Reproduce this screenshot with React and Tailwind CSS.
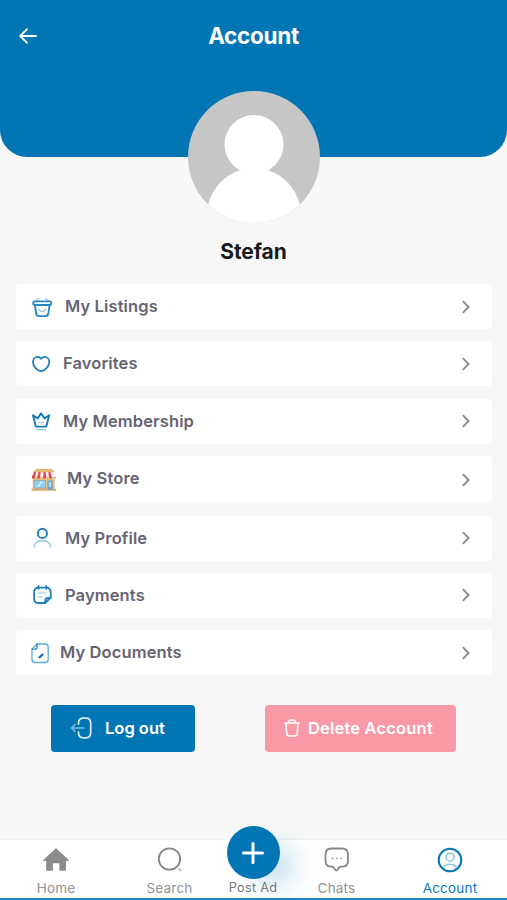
import React from "react";

const BLUE = "#0276b8";

function BasketIcon() {
  return (
    <svg width="22" height="22" viewBox="31 296 22 22" className="shrink-0" fill="none" stroke="#2787c2" strokeWidth="1.9" strokeLinecap="round" strokeLinejoin="round">
      <path d="M38.500 298.500l-2.600 2.600M45.800 298.500l2.600 2.600" stroke="#8cc4e4" strokeWidth="1.200" />
      <rect x="33.200" y="301.400" width="18" height="3.600" rx="1.700" />
      <path d="M34.900 305.200l1.300 8.400c.3 1.800 1.200 2.500 2.900 2.500h6.400c1.700 0 2.500-.7 2.800-2.500l1.300-8.400" />
      <path d="M39 309c.6 3.300 6 3.300 6.600 0" stroke="#8cc4e4" strokeWidth="1.300" />
    </svg>
  );
}

function HeartIcon() {
  return (
    <svg width="22" height="20" viewBox="30 353 22 20" className="shrink-0" fill="none" stroke="#1e80bd" strokeWidth="1.8" strokeLinejoin="round">
      <path d="M41.700 370.100c-.4.150-.8.150-1.200 0C37.600 369.200 33 366 33 361c0-2.900 2-5.100 4.500-5.100 1.500 0 2.800.7 3.600 1.900.8-1.200 2.100-1.900 3.600-1.900 2.500 0 4.500 2.200 4.500 5.100 0 5-4.600 8.200-7.500 9.100z" />
    </svg>
  );
}

function CrownIcon() {
  return (
    <svg width="22" height="20" viewBox="30 410 22 20" className="shrink-0" fill="none" stroke="#1779b8" strokeWidth="1.900" strokeLinejoin="round" strokeLinecap="round">
      <path d="M35.900 425.600L33 414.200l4.700 3.200 3.400-5 3.400 5 4.700-3.200-2.900 11.400z" />
      <path d="M38.800 421.500h4.600M36.500 428.600h9.200" stroke="#8cc4e4" strokeWidth="1.200" />
    </svg>
  );
}

function StoreIcon() {
  return (
    <svg width="26" height="25" viewBox="30 467 26 25" className="shrink-0">
      <path d="M35.500 469h17v5h-17z M33.500 470.500h20.500v4H33.500z" fill="#dfb878" />
      <rect x="32.700" y="475" width="22" height="14.500" fill="#e7bd7d" />
      <rect x="31.500" y="488.700" width="24.500" height="2.100" fill="#d8ac73" />
      <rect x="34.300" y="480.500" width="11.200" height="7.500" fill="#8fd0ee" stroke="#8fa9b5" strokeWidth=".8" />
      <path d="M36.300 487l5-6h2.400l-5 6z" fill="#c5e9f7" />
      <rect x="47.500" y="480.500" width="5.200" height="9" fill="#699fc8" />
      <rect x="48.700" y="481.700" width="2.600" height="5.500" fill="#aadbef" />
      <path d="M34 472h19.200l2.200 5.300H31.700z" fill="#fff0ed" />
      <path d="M34 472h2.200l-1.300 5.300h-3.200zM38.500 472h2.200l-.6 5.300h-2.900zM43.400 472h2.200l.6 5.300h-3.100zM48.200 472h2.200l1.600 5.300h-3z" fill="#e84f54" />
      <path d="M31.700 477h3.200a1.600 1.800 0 0 1-3.200 0M37.200 477h3a1.500 1.800 0 0 1-3 0M43 477h3.200a1.600 1.800 0 0 1-3.200 0M49 477h3a1.500 1.800 0 0 1-3 0M54.200 477h1.600l-.4 1.500z" fill="#d9464d" />
    </svg>
  );
}

function ProfileIcon() {
  return (
    <svg width="22" height="22" viewBox="31 527 22 22" className="shrink-0" fill="none">
      <circle cx="42.400" cy="533.400" r="4.600" stroke="#1e80bd" strokeWidth="1.900" />
      <path d="M34.300 547c0-3.900 3.400-6.500 8.100-6.500s8.100 2.600 8.100 6.500" stroke="#8cc4e4" strokeWidth="1.400" strokeLinecap="round" />
    </svg>
  );
}

function PaymentsIcon() {
  return (
    <svg width="22" height="22" viewBox="31 584 22 22" className="shrink-0" fill="none" stroke="#1e80bd" strokeWidth="1.800" strokeLinecap="round" strokeLinejoin="round">
      <path d="M50.700 597.500v-5.300c0-3-1.600-4.600-4.600-4.600h-7.400c-3 0-4.600 1.600-4.600 4.600v6.200c0 3 1.600 4.600 4.600 4.600h6.500z" />
      <path d="M50.600 597.800h-2.500c-2 0-2.900.9-2.900 2.700v2.400M38.500 585.800v3M46.300 585.800v3" />
      <path d="M38 593h8.200M38 597h4.200" stroke="#8cc4e4" strokeWidth="1.200" />
    </svg>
  );
}

function DocumentIcon() {
  return (
    <svg width="20" height="22" viewBox="30 640 20 22" className="shrink-0" fill="none" stroke="#5ba7d3" strokeWidth="1.300" strokeLinecap="round" strokeLinejoin="round">
      <path d="M37 642h8.200c2 0 3 1 3 3v12.500c0 2-1 3-3 3H35c-2 0-3-1-3-3V647z" />
      <path d="M37 642v3c0 1.500-.7 2.200-2.200 2.200H32.200" stroke="#2787c2" />
      <path d="M39 656l4-4" stroke="#0874b8" strokeWidth="2.400" strokeLinecap="butt" />
    </svg>
  );
}

function Chevron() {
  return (
    <svg width="12" height="16" viewBox="0 0 12 16" className="mr-[20px] ml-auto" fill="none" stroke="#8b8b8e" strokeWidth="1.900">
      <path d="M2.800 2.200L8.600 8l-5.800 5.800" />
    </svg>
  );
}

const rows = [
  { label: "My Listings", Icon: BasketIcon, pad: "pl-[15px] gap-[12px]", h: "h-[45px]", text: "pb-px" },
  { label: "Favorites", Icon: HeartIcon, pad: "pl-[14px] gap-[11px]", h: "h-[45px]", text: "pb-px" },
  { label: "My Membership", Icon: CrownIcon, pad: "pl-[14px] gap-[11px]", h: "h-[45px]", text: "pb-px" },
  { label: "My Store", Icon: StoreIcon, pad: "pl-[14px] gap-[11px]", h: "h-[47px]", text: "pb-[3px]" },
  { label: "My Profile", Icon: ProfileIcon, pad: "pl-[15px] gap-[12px]", h: "h-[45px]", text: "pb-px" },
  { label: "Payments", Icon: PaymentsIcon, pad: "pl-[15px] gap-[12px]", h: "h-[45px]", text: "pb-px" },
  { label: "My Documents", Icon: DocumentIcon, pad: "pl-[14px] gap-[10px]", h: "h-[45px]", text: "pb-[2px]" },
];

export default function App() {
  return (
    <div className="flex h-[900px] w-[507px] flex-col overflow-hidden bg-[#f7f7f7] font-['Inter',sans-serif]">
      <header className="grid h-[157px] shrink-0 grid-cols-[60px_1fr_60px] items-start rounded-b-[27px] bg-[#0276b5] text-white">
        <svg width="20" height="18" viewBox="0 0 20 18" className="mt-[27px] ml-[18px]" fill="none" stroke="white" strokeWidth="1.900" strokeLinecap="round" strokeLinejoin="round">
          <path d="M18 9H2.200M9 2.200L2.200 9 9 15.800" />
        </svg>
        <h1 className="mt-[21px] text-center text-[22.500px] leading-[30px] font-bold tracking-[-0.300px]">Account</h1>
      </header>

      <section className="-mt-[66px] flex shrink-0 flex-col items-center">
        <svg width="132" height="132" viewBox="0 0 132 132">
          <defs>
            <clipPath id="avatar"><circle cx="66" cy="66" r="66" /></clipPath>
          </defs>
          <g clipPath="url(#avatar)">
            <rect width="132" height="132" fill="#c6c6c6" />
            <circle cx="66" cy="53.500" r="29.500" fill="white" />
            <path d="M20 114C25 95 38 84 51 79.500h30C94 84 107 95 112 114v20H20z" fill="white" />
          </g>
        </svg>
        <h2 className="mt-[14px] text-[21px] leading-[30px] font-bold tracking-[-0.100px] text-[#1b1b1b]">Stefan</h2>
      </section>

      <ul className="mt-[17px] mr-[15px] ml-[16px] flex shrink-0 flex-col gap-[12.400px]">
        {rows.map(({ label, Icon, pad, h, text }) => (
          <li key={label} className={`flex items-center rounded-[4px] bg-white ${pad} ${h}`}>
            <Icon />
            <span className={`text-[16.500px] leading-[20px] font-semibold tracking-[0.120px] text-[#666472] ${text}`}>{label}</span>
            <Chevron />
          </li>
        ))}
      </ul>

      <div className="mt-[30px] flex shrink-0 justify-between pr-[51px] pl-[51px] text-[16.500px] font-semibold text-white">
        <button className="flex h-[47px] w-[144px] items-center rounded-[4px] bg-[#0276b5] pb-px pl-[19px]">
          <svg width="24" height="24" viewBox="70 716.500 24 24" fill="none" strokeLinecap="round" strokeLinejoin="round" className="mr-[11px] shrink-0">
            <path d="M78.500 724.500v-.8c0-3.300 1.700-5 5-5h2.200c3.300 0 5 1.700 5 5v9.600c0 3.300-1.700 5-5 5h-2.200c-3.300 0-5-1.700-5-5v-.8" stroke="#d9edf7" strokeWidth="1.700" />
            <path d="M84 728.500H71.800M75 725l-3.500 3.500L75 732" stroke="#79b8da" strokeWidth="1.700" />
          </svg>
          Log out
        </button>
        <button className="flex h-[47px] w-[191px] items-center rounded-[4px] bg-[#f899a5] pb-px pl-[18px] tracking-[0.180px] whitespace-nowrap">
          <svg width="18" height="20" viewBox="283.500 718.500 18 20" fill="none" stroke="white" strokeWidth="1.500" strokeLinecap="round" strokeLinejoin="round" className="mr-[7px] shrink-0">
            <path d="M285.500 723.500h14M289 723l.5-1.600c.2-.7.600-1 1.300-1h3.400c.7 0 1.100.3 1.300 1l.5 1.600M286.600 724l.6 10.200c.2 1.500 1 2.300 2.600 2.300h5.400c1.600 0 2.400-.8 2.600-2.300l.6-10.200" />
          </svg>
          Delete Account
        </button>
      </div>

      <nav className="mt-auto grid h-[61px] shrink-0 grid-cols-[112px_115px_52px_115px_113px] border-t border-b-2 border-t-[#f0f0f0] border-b-[#2384bf] bg-white text-[13.500px] leading-[16px] tracking-[0.200px] text-[#929292]">
        <div className="flex flex-col items-center pt-[7px]">
          <svg width="28" height="25" viewBox="42 847 28 25" fill="#8c8c8c">
            <path d="M56 848.200L68.800 860q.3.800-.7.900H66v8.800q0 1-1 1h-5.600v-7.500h-6.500v7.500h-5.800q-1 0-1-1v-8.800h-2.200q-1-.1-.7-.9z" />
          </svg>
          <span className="mt-[8px]">Home</span>
        </div>
        <div className="flex flex-col items-center pt-[7px]">
          <svg width="26" height="25" viewBox="156.500 847 26 25" fill="none" stroke="#858585" strokeLinecap="round">
            <circle cx="169" cy="859" r="10.700" strokeWidth="1.800" />
            <path d="M178.500 869l1.800 1.500" stroke="#bababa" strokeWidth="1.800" />
          </svg>
          <span className="mt-[8px]">Search</span>
        </div>
        <div className="-mt-[14px] flex flex-col items-center">
          <div className="flex size-[53px] shrink-0 items-center justify-center rounded-full bg-[#0276b5] shadow-[20px_13px_24px_-4px_rgba(2,118,181,0.2)]">
            <svg width="24" height="24" viewBox="0 0 24 24" stroke="white" strokeWidth="3" strokeLinecap="round">
              <path d="M12 2.500v19M2.500 12h19" />
            </svg>
          </div>
          <span className="relative mt-px text-[12.700px] leading-[15px] tracking-[0.250px] whitespace-nowrap text-[#74777b]">Post Ad</span>
        </div>
        <div className="flex flex-col items-center pt-[7px]">
          <svg width="26" height="26" viewBox="324 847 26 26" fill="none" stroke="#858585" strokeWidth="1.800" strokeLinejoin="round">
            <path d="M331.500 848.500h10.500c3.900 0 6 2.100 6 6v6.200c0 3.900-2.100 6-6 6h-1.300c-.6 0-1 .2-1.400.6l-1.800 2.500c-.7.900-1.500.9-2.200 0l-1.800-2.500c-.4-.4-.8-.6-1.400-.6h-.6c-3.900 0-6-2.100-6-6v-6.200c0-3.900 2.100-6 6-6z" />
            <path d="M331.500 858.500h2M335.800 858.500h2M340.100 858.500h2" stroke="#ababab" strokeWidth="1.600" />
          </svg>
          <span className="mt-[7px]">Chats</span>
        </div>
        <div className="flex flex-col items-center pt-[7px] pr-px text-[#0879bc]">
          <svg width="26" height="26" viewBox="437.500 847 26 26" fill="none">
            <circle cx="450.500" cy="860" r="11.300" stroke={BLUE} strokeWidth="2" />
            <circle cx="450.500" cy="857.200" r="4" stroke="#8cc4e4" strokeWidth="1.600" />
            <path d="M443.800 867.500c1.500-2.100 3.900-3.200 6.700-3.200s5.200 1.100 6.700 3.200" stroke="#8cc4e4" strokeWidth="1.500" />
          </svg>
          <span className="mt-[7px]">Account</span>
        </div>
      </nav>
    </div>
  );
}
